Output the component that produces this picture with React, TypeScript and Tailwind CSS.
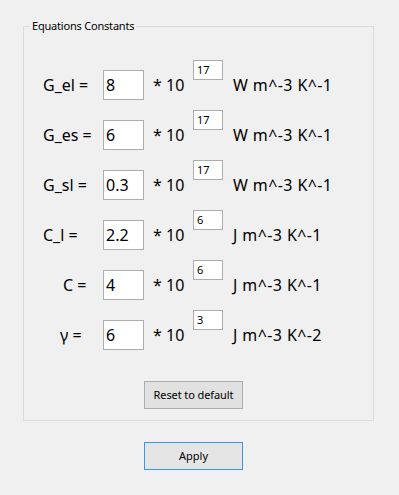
const rows = [
  { label: 'G_el =', indent: 'pl-0', value: '8', exp: '17', unit: 'W m^-3 K^-1' },
  { label: 'G_es =', indent: 'pl-0', value: '6', exp: '17', unit: 'W m^-3 K^-1' },
  { label: 'G_sl =', indent: 'pl-0', value: '0.3', exp: '17', unit: 'W m^-3 K^-1' },
  { label: 'C_l =', indent: 'pl-0', value: '2.2', exp: '6', unit: 'J m^-3 K^-1' },
  { label: 'C =', indent: 'pl-[20px]', value: '4', exp: '6', unit: 'J m^-3 K^-1' },
  { label: 'γ =', indent: 'pl-[17px]', value: '6', exp: '3', unit: 'J m^-3 K^-2' },
]

function ConstantRow({ label, indent, value, exp, unit }: (typeof rows)[number]) {
  return (
    <div className="flex h-[40px] items-end text-[16px] text-black">
      <div className={`flex h-[30px] w-[60px] items-center ${indent}`}>{label}</div>
      <div className="flex h-[30px] w-[41px] items-center border border-[#adadad] bg-white pl-[2px]">
        {value}
      </div>
      <div className="flex h-[30px] w-[49px] items-center pl-[9px]">* 10</div>
      <div className="h-[20px] w-[30px] self-start border border-[#adadad] bg-white pl-[3px] text-[11px] leading-[18px]">
        {exp}
      </div>
      <div className="flex h-[30px] items-center pl-[10px] tracking-[0.4px]">{unit}</div>
    </div>
  )
}

export default function App() {
  return (
    <div className="h-[495px] w-[399px] bg-[#f0f0f0] pt-[26px] font-['Noto_Sans','Segoe_UI',sans-serif]">
      <div className="relative ml-[23px] h-[395px] w-[351px] border border-[#dcdcdc]">
        <span className="absolute left-[6px] top-[-9px] bg-[#f0f0f0] px-[2px] text-[11px] leading-[16px] tracking-[-0.2px] text-black">
          Equations Constants
        </span>
        <div className="flex flex-col gap-[10px] pl-[19px] pt-[33px]">
          {rows.map((r) => (
            <ConstantRow key={r.label} {...r} />
          ))}
        </div>
        <button className="ml-[120px] mt-[31px] h-[28px] w-[99px] border border-[#adadad] bg-[#e1e1e1] text-[11px] tracking-[-0.1px] text-black">
          Reset to default
        </button>
      </div>
      <button className="ml-[144px] mt-[21px] h-[28px] w-[99px] border border-[#3e95f0] bg-[#e5e5e5] text-[11px] text-black">
        Apply
      </button>
    </div>
  )
}
